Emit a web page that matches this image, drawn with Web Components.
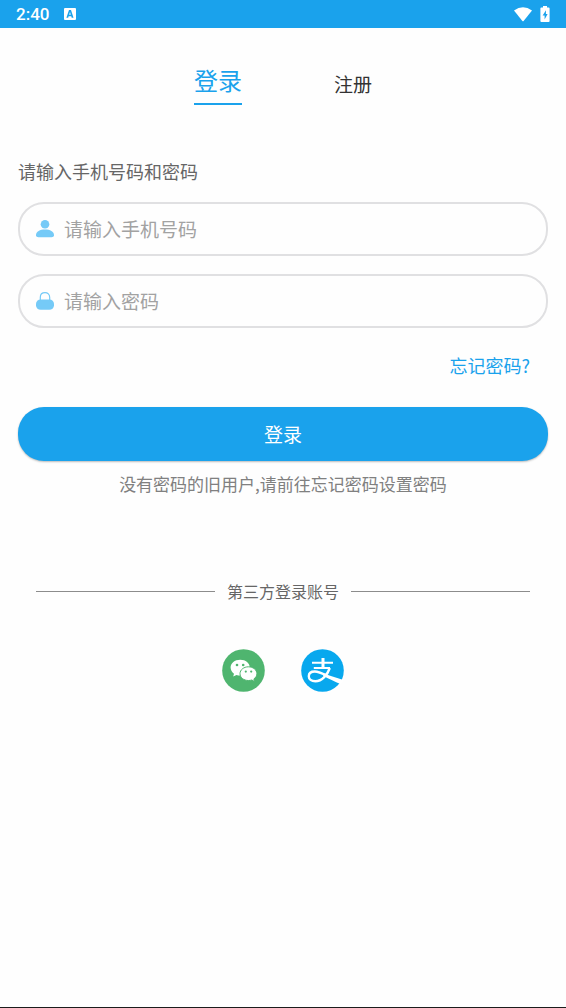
<!DOCTYPE html>
<html lang="zh-CN">
<head>
<meta charset="utf-8">
<meta name="viewport" content="width=device-width, initial-scale=1">
<title>登录</title>
<style>
  html { --brand: #1aa2ec; }
  body { margin: 0; background: #fefefe; font-family: "Noto Sans CJK SC", "Noto Sans", sans-serif; color: #666; }
</style>
</head>
<body>
<login-page></login-page>

<template id="status-bar">
  <style>
    :host { display: flex; align-items: center; height: 28px; padding: 0 16px; background: var(--brand); color: #fff; font-family: Roboto, sans-serif; font-size: 17px; font-weight: 500; line-height: 28px; }
    svg { display: block; fill: #fff; }
    .app { margin-left: 15px; }
    .right { margin-left: auto; display: flex; align-items: center; gap: 8px; }
  </style>
  <time>2:40</time>
  <svg class="app" width="12" height="12" viewBox="0 0 12 12" aria-hidden="true"><path fill-rule="evenodd" d="M1 0H11Q12 0 12 1V11Q12 12 11 12H1Q0 12 0 11V1Q0 0 1 0ZM5 2 2.4 9.8H4.2L4.6 8.3H7.3L7.7 9.8H9.5L7 2ZM6 4 6.8 6.8H5.1Z"/></svg>
  <div class="right">
    <svg width="18" height="15" viewBox="0 0 18 15" aria-hidden="true"><path d="M0 3.4Q9-3 18 3.4L9.6 14Q9 14.7 8.4 14Z"/></svg>
    <svg width="10" height="16" viewBox="0 0 10 16" aria-hidden="true"><path fill-rule="evenodd" d="M3 0H7V1.6H8.6Q9.6 1.6 9.6 2.6V15Q9.6 16 8.6 16H1.4Q.4 16 .4 15V2.6Q.4 1.6 1.4 1.6H3ZM6 4.2 2.6 9.5H4.6V13.4L7.6 8H5.9Z"/></svg>
  </div>
</template>

<template id="auth-tab">
  <style>
    :host { display: block; }
    button { display: block; margin: 0; padding: 0; border: 0; background: none; color: #333; font: 19px/26px "Noto Sans CJK SC", sans-serif; cursor: pointer; }
    :host([selected]) button { padding-bottom: 6px; border-bottom: 2px solid var(--brand); color: var(--brand); font-size: 24px; line-height: 34px; }
  </style>
  <button type="button"><slot></slot></button>
</template>

<template id="text-field">
  <style>
    :host { display: block; }
    label { display: flex; align-items: center; gap: 10px; box-sizing: border-box; height: 54px; padding: 0 16px; border: 2px solid #e0e0e2; border-radius: 26px; }
    input { flex: 1; min-width: 0; height: 32px; margin: 0; padding: 0; border: 0; outline: 0; background: none; color: #333; font: 19px/32px "Noto Sans CJK SC", sans-serif; }
    input::placeholder { color: #a2a2a2; opacity: 1; }
    ::slotted(svg) { display: block; flex: none; }
  </style>
  <label><slot></slot><input></label>
</template>

<template id="primary-button">
  <style>
    :host { display: block; }
    button { display: block; width: 100%; height: 54px; margin: 0; padding: 0; border: 0; border-radius: 26px; background: var(--brand); color: #fff; box-shadow: 0 1px 2px #0004; font: 19px/28px "Noto Sans CJK SC", sans-serif; cursor: pointer; }
  </style>
  <button type="submit"><slot></slot></button>
</template>

<template id="line-divider">
  <style>
    :host { display: flex; align-items: center; gap: 12px; padding: 0 18px; font-size: 16px; line-height: 24px; color: #666; }
    :host::before, :host::after { content: ""; flex: 1; height: 1px; background: #8c8c8c; }
  </style>
  <slot></slot>
</template>

<template id="social-button">
  <style>
    :host { display: block; }
    button { display: block; margin: 0; padding: 0; border: 0; border-radius: 50%; background: none; cursor: pointer; }
    ::slotted(svg) { display: block; }
  </style>
  <button type="button"><slot></slot></button>
</template>

<template id="login-page">
  <style>
    :host { display: flex; flex-direction: column; box-sizing: border-box; min-height: 100vh; border-bottom: 1px solid #1c1c1c; }
    main { padding: 0 18px; }
    nav { display: flex; justify-content: center; align-items: center; gap: 92px; margin-top: 35px; }
    h1 { margin: 52px 0 0; font-size: 18px; line-height: 28px; font-weight: 400; color: #666; }
    form { display: flex; flex-direction: column; }
    text-field { margin-top: 18px; }
    h1 + text-field { margin-top: 17px; }
    a { align-self: flex-end; margin: 23px 18px 0 0; color: var(--brand); font-size: 18px; line-height: 28px; text-decoration: none; }
    primary-button { margin-top: 28px; }
    p { margin: 11px 0 0; text-align: center; font-size: 17px; line-height: 24px; color: #808080; }
    line-divider { margin-top: 83px; }
    .social { display: flex; justify-content: center; gap: 36px; margin-top: 46px; }
  </style>
  <status-bar></status-bar>
  <main>
    <nav><auth-tab selected>登录</auth-tab><auth-tab>注册</auth-tab></nav>
    <form>
      <h1>请输入手机号码和密码</h1>
      <text-field type="tel" placeholder="请输入手机号码">
        <svg width="18" height="18" viewBox="0 0 18 18" fill="#75caf7" aria-hidden="true"><circle cx="9" cy="4.3" r="4.3"/><path d="M0 15.2C0 11.6 4 9.6 9 9.6S18 11.6 18 15.2Q18 17.2 15.6 17.2H2.4Q0 17.2 0 15.2Z"/></svg>
      </text-field>
      <text-field type="password" placeholder="请输入密码">
        <svg width="18" height="18" viewBox="0 0 18 18" fill="#75caf7" aria-hidden="true"><rect y="7.4" width="18" height="10.4" rx="4.6"/><path d="M4.3 9V5.4C4.3 2.5 6.3.6 9 .6S13.7 2.5 13.7 5.4V9" fill="none" stroke="#75caf7" stroke-width="1.2"/></svg>
      </text-field>
      <a href="#forgot">忘记密码?</a>
      <primary-button>登录</primary-button>
    </form>
    <p>没有密码的旧用户,请前往忘记密码设置密码</p>
    <line-divider>第三方登录账号</line-divider>
    <div class="social">
      <social-button label="微信登录">
        <svg width="43" height="43" viewBox="0 0 43 43" aria-hidden="true">
          <circle cx="21.5" cy="21.5" r="21.3" fill="#4fb56f"/>
          <path fill="#fff" d="M18.2 10.8C12.7 10.8 8.6 14.2 8.6 18.6C8.6 21.2 10 23.2 12 24.7L11.2 27.6L14.5 25.9Q16.3 26.4 18.2 26.4C23.7 26.4 27.8 23 27.8 18.6S23.7 10.8 18.2 10.8Z"/>
          <path fill="#fff" stroke="#4fb56f" d="M26.4 17.8C21.8 17.8 18 20.8 18 24.7S21.8 31.5 26.4 31.5Q28.2 31.5 29.8 31L32.7 32.6L31.9 29.9C33.8 28.6 34.9 26.8 34.9 24.7C34.9 20.8 31 17.8 26.4 17.8Z"/>
          <g fill="#4fb56f"><circle cx="15" cy="16" r="1.3"/><circle cx="21.2" cy="16" r="1.3"/><circle cx="23.8" cy="22.6" r="1.1"/><circle cx="29.2" cy="22.6" r="1.1"/></g>
        </svg>
      </social-button>
      <social-button label="支付宝登录">
        <svg width="43" height="43" viewBox="0 0 43 43" aria-hidden="true">
          <circle cx="21.5" cy="21.5" r="21.3" fill="#08a8ee"/>
          <g fill="none" stroke="#fff" stroke-width="2"><path d="M11 13.8H32M12.8 19H29"/><path d="M22 9V19" stroke-width="3"/><path d="M28.8 19C26.6 25.5 21 32.2 14.4 32.2C10.3 32.2 7.8 30 7.8 27.2C7.8 24.2 10.3 22.5 13.8 22.5C18 22.5 21.5 24.5 26 26.8" stroke-width="2.4"/></g>
          <path fill="#fff" d="M23.5 24.3C29 27 35 28.8 42.3 31Q41.4 33.2 40 35.2C33.5 32.5 27.5 29.6 22 26.7Z"/>
        </svg>
      </social-button>
    </div>
  </main>
</template>

<script>
  class TemplateElement extends HTMLElement {
    constructor() {
      super();
      const template = document.getElementById(this.localName);
      this.attachShadow({ mode: "open" }).append(template.content.cloneNode(true));
    }
  }
  class StatusBar extends TemplateElement {}
  class AuthTab extends TemplateElement {
    connectedCallback() {
      this.shadowRoot.querySelector("button").setAttribute("aria-pressed", String(this.hasAttribute("selected")));
    }
  }
  class TextField extends TemplateElement {
    connectedCallback() {
      const input = this.shadowRoot.querySelector("input");
      input.type = this.getAttribute("type") || "text";
      input.placeholder = this.getAttribute("placeholder") || "";
      input.setAttribute("aria-label", input.placeholder);
    }
  }
  class PrimaryButton extends TemplateElement {}
  class LineDivider extends TemplateElement {}
  class SocialButton extends TemplateElement {
    connectedCallback() {
      this.shadowRoot.querySelector("button").setAttribute("aria-label", this.getAttribute("label"));
    }
  }
  class LoginPage extends TemplateElement {}

  customElements.define("status-bar", StatusBar);
  customElements.define("auth-tab", AuthTab);
  customElements.define("text-field", TextField);
  customElements.define("primary-button", PrimaryButton);
  customElements.define("line-divider", LineDivider);
  customElements.define("social-button", SocialButton);
  customElements.define("login-page", LoginPage);
</script>
</body>
</html>
